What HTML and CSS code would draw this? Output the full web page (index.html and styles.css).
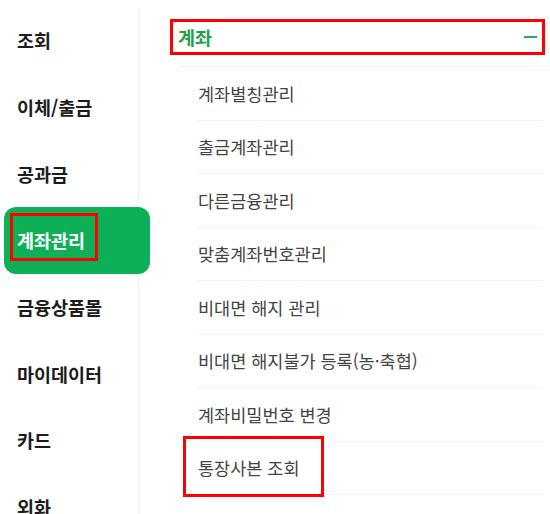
FILE: index.html
```html
<!DOCTYPE html>
<html lang="ko">
<head>
<meta charset="utf-8">
<title>계좌관리</title>
<link rel="stylesheet" href="styles.css">
</head>
<body>
<div class="page">
  <nav class="side">
    <div class="side-item">조회</div>
    <div class="side-item">이체/출금</div>
    <div class="side-item">공과금</div>
    <div class="side-item active">계좌관리</div>
    <div class="side-item">금융상품몰</div>
    <div class="side-item">마이데이터</div>
    <div class="side-item">카드</div>
    <div class="side-item">외화</div>
  </nav>
  <section class="main">
    <div class="group-head">
      <span class="group-title">계좌</span>
      <span class="minus"></span>
    </div>
    <ul class="sub-list">
      <li class="sub-item">계좌별칭관리</li>
      <li class="sub-item">출금계좌관리</li>
      <li class="sub-item">다른금융관리</li>
      <li class="sub-item">맞춤계좌번호관리</li>
      <li class="sub-item">비대면 해지 관리</li>
      <li class="sub-item">비대면 해지불가 등록(농·축협)</li>
      <li class="sub-item">계좌비밀번호 변경</li>
      <li class="sub-item">통장사본 조회</li>
    </ul>
  </section>
  <div class="mark mark-side"></div>
  <div class="mark mark-head"></div>
  <div class="mark mark-item"></div>
</div>
</body>
</html>
```

FILE: styles.css
```css
html, body {
  margin: 0;
  padding: 0;
  background: #ffffff;
}
body {
  font-family: "Noto Sans CJK KR", "Noto Sans", sans-serif;
  width: 550px;
  height: 514px;
  overflow: hidden;
}
.page {
  position: relative;
  display: flex;
  padding-top: 7px;
  height: 507px;
}
.side {
  width: 138px;
  flex: none;
  border-right: 1px solid #f1f1f1;
  position: relative;
  z-index: 1;
}
.side-item {
  height: 66.7px;
  display: flex;
  align-items: center;
  padding-left: 17px;
  font-size: 18.5px;
  font-weight: 700;
  color: #1c1c1c;
  box-sizing: border-box;
}
.side-item.active {
  margin-left: 4px;
  width: 146px;
  padding-left: 13px;
  background: #0db057;
  color: #ffffff;
  border-radius: 12px;
}
.main {
  flex: 1;
  padding-left: 39px;
}
.group-head {
  height: 60px;
  box-sizing: border-box;
  border-bottom: 1px solid #f3f3f3;
  display: flex;
  align-items: center;
  justify-content: space-between;
  padding-right: 13px;
}
.group-title {
  font-size: 18.5px;
  font-weight: 700;
  color: #1ea24b;
}
.minus {
  width: 13px;
  height: 2px;
  background: #2aa853;
}
.sub-list {
  list-style: none;
  margin: 0 7px 0 20px;
  padding: 0;
}
.sub-item {
  height: 53.5px;
  box-sizing: border-box;
  border-bottom: 1px solid #f3f3f3;
  display: flex;
  align-items: center;
  font-size: 17.5px;
  color: #444444;
}
.mark {
  position: absolute;
  border: 3px solid #ff0000;
  box-sizing: border-box;
  z-index: 2;
}
.mark-side {
  left: 10px;
  top: 213px;
  width: 88px;
  height: 48px;
}
.mark-head {
  left: 170px;
  top: 19px;
  width: 375px;
  height: 36px;
}
.mark-item {
  left: 183px;
  top: 436px;
  width: 141px;
  height: 61px;
}
```
